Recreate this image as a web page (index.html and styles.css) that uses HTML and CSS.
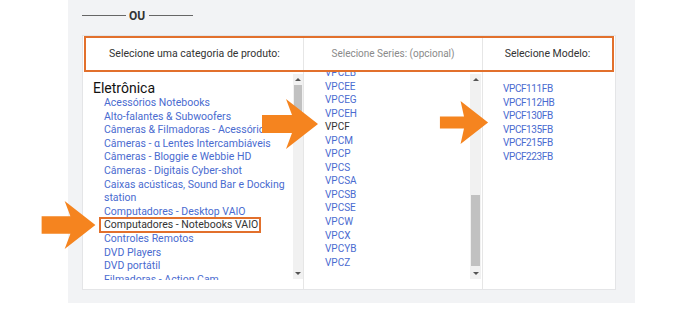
FILE: index.html
```html
<!DOCTYPE html>
<html>
<head>
	<meta charset="utf-8" />
	<title>Suporte - Selecione o produto</title>
	<link rel="stylesheet" href="styles.css">
</head>
<body>
<div class="page">
	<div class="panel">
		<div class="ou"><span class="rule"></span><b>OU</b><span class="rule"></span></div>

		<div class="chooser">
			<div class="head">
				<div class="hcell">Selecione uma categoria de produto:</div>
				<div class="hcell muted">Selecione Series: (opcional)</div>
				<div class="hcell">Selecione Modelo:</div>
			</div>

			<div class="cols">
				<!-- categorias -->
				<div class="col col-cat">
					<div class="listbox">
						<div class="group">Eletrônica</div>
						<ul class="list">
							<li><a href="#">Acessórios Notebooks</a></li>
							<li><a href="#">Alto-falantes &amp; Subwoofers</a></li>
							<li><a href="#">Câmeras &amp; Filmadoras - Acessórios</a></li>
							<li><a href="#">Câmeras - α Lentes Intercambiáveis</a></li>
							<li><a href="#">Câmeras - Bloggie e Webbie HD</a></li>
							<li><a href="#">Câmeras - Digitais Cyber-shot</a></li>
							<li><a href="#">Caixas acústicas, Sound Bar e Docking station</a></li>
							<li><a href="#">Computadores - Desktop VAIO</a></li>
							<li><span class="picked">Computadores - Notebooks VAIO</span></li>
							<li><a href="#">Controles Remotos</a></li>
							<li><a href="#">DVD Players</a></li>
							<li><a href="#">DVD portátil</a></li>
							<li><a href="#">Filmadoras - Action Cam</a></li>
							<li><a href="#">Filmadoras - Handycam</a></li>
						</ul>
					</div>
					<div class="scrollbar">
						<span class="up"></span>
						<span class="thumb thumb-cat"></span>
						<span class="down"></span>
					</div>
				</div>

				<!-- series -->
				<div class="col col-series">
					<div class="listbox">
						<ul class="list series">
							<li><a href="#">VPCEB</a></li>
							<li><a href="#">VPCEE</a></li>
							<li><a href="#">VPCEG</a></li>
							<li><a href="#">VPCEH</a></li>
							<li class="current">VPCF</li>
							<li><a href="#">VPCM</a></li>
							<li><a href="#">VPCP</a></li>
							<li><a href="#">VPCS</a></li>
							<li><a href="#">VPCSA</a></li>
							<li><a href="#">VPCSB</a></li>
							<li><a href="#">VPCSE</a></li>
							<li><a href="#">VPCW</a></li>
							<li><a href="#">VPCX</a></li>
							<li><a href="#">VPCYB</a></li>
							<li><a href="#">VPCZ</a></li>
						</ul>
					</div>
					<div class="scrollbar">
						<span class="up"></span>
						<span class="thumb thumb-series"></span>
						<span class="down"></span>
					</div>
				</div>

				<!-- modelos -->
				<div class="col col-model">
					<ul class="list models">
						<li><a href="#">VPCF111FB</a></li>
						<li><a href="#">VPCF112HB</a></li>
						<li><a href="#">VPCF130FB</a></li>
						<li><a href="#">VPCF135FB</a></li>
						<li><a href="#">VPCF215FB</a></li>
						<li><a href="#">VPCF223FB</a></li>
					</ul>
				</div>
			</div>
		</div>
	</div>

	<!-- setas de destaque -->
	<svg class="arrow arrow-cat" viewBox="0 0 56 50"><polygon points="0,16 30,16 24,0 56,25 24,50 30,34 0,34" /></svg>
	<svg class="arrow arrow-series" viewBox="0 0 56 50"><polygon points="0,16 30,16 24,0 56,25 24,50 30,34 0,34" /></svg>
	<svg class="arrow arrow-model" viewBox="0 0 56 50"><polygon points="0,18 28,18 24,0 56,25 24,50 28,32 0,32" /></svg>
</div>
</body>
</html>
```

FILE: styles.css
```css
* {
  box-sizing: border-box;
}

body {
  margin: 0;
  background: #fff;
  font-family: Roboto, "Open Sans", sans-serif;
  font-size: 10.5px;
  color: #333;
}

.page {
  position: relative;
  width: 695px;
  height: 318px;
}

.panel {
  margin-left: 68px;
  width: 567px;
  height: 303px;
  background: #f2f3f5;
  padding-left: 14px;
}

/* OU divider */
.ou {
  height: 35px;
  display: flex;
  align-items: center;
  padding-bottom: 4px;
}

.ou .rule {
  width: 44px;
  height: 1px;
  background: #666;
}

.ou b {
  margin: 0 4px 0 3px;
  font-size: 12px;
  color: #333;
}

/* chooser box */
.chooser {
  width: 534px;
  height: 255px;
  background: #fff;
  border: 1px solid #e4e5e7;
}

.head {
  height: 36px;
  margin: 0 1px;
  border: 2px solid #e2702c;
  display: grid;
  grid-template-columns: 218px 179px 1fr;
}

.hcell {
  display: flex;
  align-items: center;
  justify-content: center;
  border-right: 1px solid #e6e6e6;
  color: #333;
  padding-bottom: 1px;
}

.hcell:last-child {
  border-right: 0;
}

.hcell.muted {
  color: #8a8a8a;
  font-size: 10px;
}

.cols {
  height: 217px;
  display: grid;
  grid-template-columns: 221px 179px 1fr;
}

.col {
  position: relative;
  border-right: 1px solid #e6e6e6;
}

.col:last-child {
  border-right: 0;
}

.listbox {
  overflow: hidden;
}

.col-cat .listbox {
  margin-top: 2px;
  height: 206px;
  padding: 7px 11px 0 10px;
}

.col-series .listbox {
  height: 216px;
  padding-left: 21px;
}

.group {
  color: #111;
  font-size: 14px;
  line-height: 15px;
}

.list {
  list-style: none;
  margin: 0;
  padding: 0 0 0 11px;
  line-height: 13.6px;
}

.list a {
  color: #4a6bd0;
  text-decoration: none;
}

.list.series {
  padding: 0;
  margin-top: -6px;
  font-size: 10px;
  line-height: 13.55px;
}

.list.series .current {
  color: #333;
}

.list.models {
  padding: 10px 0 0 20px;
  font-size: 10px;
  letter-spacing: -0.4px;
  line-height: 13.6px;
}

.picked {
  display: inline-block;
  color: #333;
  line-height: 12px;
  border: 2px solid #e2702c;
  padding: 0 1px 0 3px;
  margin: -1.2px 0 -1.2px -5px;
}

/* fake list scrollbars */
.scrollbar {
  position: absolute;
  top: 2px;
  right: 0;
  width: 10px;
  height: 205px;
  background: #f1f1f1;
}

.col-series .scrollbar {
  width: 11px;
  right: 1px;
}

.scrollbar .up,
.scrollbar .down {
  position: absolute;
  left: 50%;
  margin-left: -3px;
  width: 0;
  height: 0;
  border-left: 3px solid transparent;
  border-right: 3px solid transparent;
}

.scrollbar .up {
  top: 4px;
  border-bottom: 3px solid #555;
}

.scrollbar .down {
  bottom: 4px;
  border-top: 3px solid #555;
}

.thumb {
  position: absolute;
  left: 1px;
  right: 1px;
  background: #c1c1c1;
}

.thumb-cat {
  top: 11px;
  height: 30px;
}

.thumb-series {
  top: 121px;
  height: 71px;
}

/* orange callout arrows */
.arrow {
  position: absolute;
  fill: #f5841f;
}

.arrow-cat {
  left: 40px;
  top: 201px;
  width: 57px;
  height: 48px;
}

.arrow-series {
  left: 262px;
  top: 99px;
  width: 56px;
  height: 50px;
}

.arrow-model {
  left: 436px;
  top: 101px;
  width: 56px;
  height: 43px;
}
```
